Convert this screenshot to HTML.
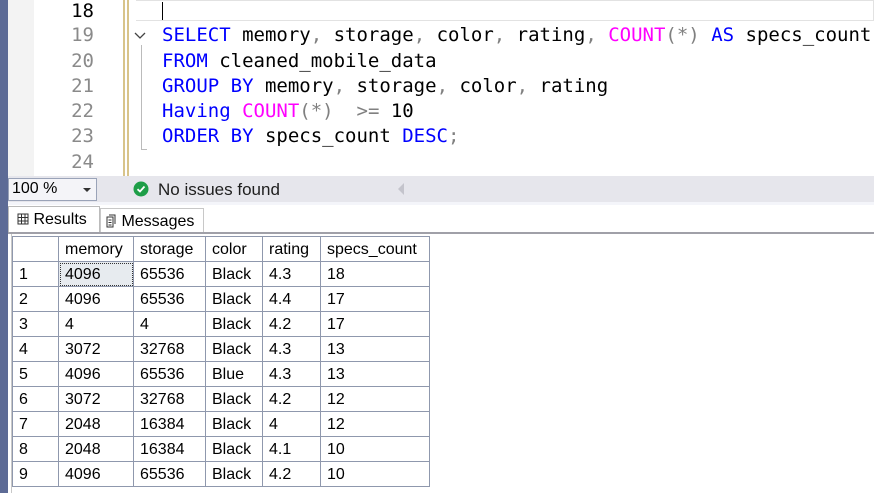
<!DOCTYPE html>
<html><head><meta charset="utf-8"><style>
*{margin:0;padding:0;box-sizing:border-box}
body{width:874px;height:493px;overflow:hidden;background:#fff;position:relative;font-family:"Liberation Sans",sans-serif}
.lbar{position:absolute;left:0;top:0;width:8px;height:493px;background:#5d6b96}
.gut{position:absolute;left:8px;top:0;width:26px;height:176px;background:#f3f3f3}
.ln{position:absolute;left:34px;width:60px;text-align:right;font:19px "DejaVu Sans Mono",monospace;color:#8a8a8a}
.ed{position:absolute;left:162px;font:19px "DejaVu Sans Mono",monospace;color:#000;white-space:pre}
.k{color:#0000ff}.f{color:#ff00ff}.g{color:#808080}
.ylw{position:absolute;top:0;height:176px;width:2px;background:#d8c48a}
.status{position:absolute;left:8px;top:176px;width:866px;height:26px;background:#e6e6ec}
.zoom{position:absolute;left:8px;top:178px;width:89px;height:23px;border:1px solid #9aa3b8;background:#f4f4f8;font-size:16px;padding:1px 3px}
.tab{position:absolute;top:206px;height:27px;border:1px solid #c8c8c8;border-bottom:none;background:#fff;font-size:16px;padding-top:4px}
table{position:absolute;left:12px;top:236px;border-collapse:collapse;font-size:16px}
td{border:1px solid #8f98ad;height:25px;padding:1px 0 0 6px;vertical-align:middle}
</style></head><body>
<div class="lbar"></div>
<div class="gut"></div>
<div style="position:absolute;left:136px;top:0;width:738px;height:21px;border:1px solid #e2e2e2;border-left:none"></div>
<div style="position:absolute;left:162px;top:2px;width:1px;height:18px;background:#000"></div>
<div class="ylw" style="left:123px"></div><div class="ylw" style="left:127px"></div>
<div style="position:absolute;left:141px;top:45px;width:1px;height:104px;background:#bbb"></div>
<div style="position:absolute;left:141px;top:149px;width:6px;height:1px;background:#bbb"></div>
<svg style="position:absolute;left:133px;top:31px" width="14" height="10"><path d="M2 2 L7 7 L12 2" stroke="#444" fill="none" stroke-width="1.3"/></svg>
<div class="ln" style="top:0;color:#000">18</div>
<div class="ln" style="top:24px">19</div>
<div class="ln" style="top:50px">20</div>
<div class="ln" style="top:75px">21</div>
<div class="ln" style="top:100px">22</div>
<div class="ln" style="top:125px">23</div>
<div class="ln" style="top:151px">24</div>
<div class="ed" style="top:24px"><span class="k">SELECT</span> memory<span class="g">,</span> storage<span class="g">,</span> color<span class="g">,</span> rating<span class="g">,</span> <span class="f">COUNT</span><span class="g">(*)</span> <span class="k">AS</span> specs_count</div>
<div class="ed" style="top:50px"><span class="k">FROM</span> cleaned_mobile_data</div>
<div class="ed" style="top:75px"><span class="k">GROUP BY</span> memory<span class="g">,</span> storage<span class="g">,</span> color<span class="g">,</span> rating</div>
<div class="ed" style="top:100px"><span class="k">Having</span> <span class="f">COUNT</span><span class="g">(*)</span>  <span class="g">&gt;=</span> 10</div>
<div class="ed" style="top:125px"><span class="k">ORDER BY</span> specs_count <span class="k">DESC</span><span class="g">;</span></div>
<div class="status"></div>
<div class="zoom">100 %<span style="position:absolute;right:5px;top:9px;border:4px solid transparent;border-top:4px solid #333"></span></div>
<svg style="position:absolute;left:133px;top:181px" width="16" height="16"><circle cx="8" cy="8" r="7.5" fill="#1e9e48"/><path d="M4.5 8.2 L7 10.5 L11.5 5.5" stroke="#fff" stroke-width="1.8" fill="none"/></svg>
<div style="position:absolute;left:158px;top:180px;font-size:17px;color:#1e1e1e">No issues found</div>
<svg style="position:absolute;left:396px;top:182px" width="10" height="14"><path d="M8 1 L2 7 L8 13Z" fill="#c4c4cc"/></svg>
<div style="position:absolute;left:8px;top:202px;width:866px;height:3px;background:#f4f5fa"></div>
<div class="tab" style="left:8px;width:92px;padding-left:8px;border-color:#bbb">
<svg width="12" height="12" style="vertical-align:-1px"><path d="M1 1H11V11H1ZM1 4.5H11M1 8H11M4.5 1V11M8 1V11" stroke="#333" fill="none"/></svg> Results</div>
<div class="tab" style="left:100px;width:104px;padding-left:4px;top:208px;height:25px">
<svg width="12" height="14" style="vertical-align:-2px"><path d="M2 3H8V13H2Z M4 1H10V10" stroke="#333" fill="none"/><path d="M3.5 6H6.5M3.5 8.5H6.5M3.5 11H6.5" stroke="#333"/></svg> Messages</div>
<div style="position:absolute;left:8px;top:232px;width:866px;height:2px;background:#a0a0a8"></div>
<div style="position:absolute;left:11px;top:234px;width:1px;height:259px;background:#c8c8c8"></div>
<table>
<tr><td style="width:46px"></td><td style="width:75px">memory</td><td style="width:72px">storage</td><td style="width:57px">color</td><td style="width:58px">rating</td><td style="width:109px">specs_count</td></tr>
<tr><td>1</td><td style="background:#e7ebef;outline:1px dotted #333;outline-offset:-2px">4096</td><td>65536</td><td>Black</td><td>4.3</td><td>18</td></tr>
<tr><td>2</td><td>4096</td><td>65536</td><td>Black</td><td>4.4</td><td>17</td></tr>
<tr><td>3</td><td>4</td><td>4</td><td>Black</td><td>4.2</td><td>17</td></tr>
<tr><td>4</td><td>3072</td><td>32768</td><td>Black</td><td>4.3</td><td>13</td></tr>
<tr><td>5</td><td>4096</td><td>65536</td><td>Blue</td><td>4.3</td><td>13</td></tr>
<tr><td>6</td><td>3072</td><td>32768</td><td>Black</td><td>4.2</td><td>12</td></tr>
<tr><td>7</td><td>2048</td><td>16384</td><td>Black</td><td>4</td><td>12</td></tr>
<tr><td>8</td><td>2048</td><td>16384</td><td>Black</td><td>4.1</td><td>10</td></tr>
<tr><td>9</td><td>4096</td><td>65536</td><td>Black</td><td>4.2</td><td>10</td></tr>
</table>
</body></html>
